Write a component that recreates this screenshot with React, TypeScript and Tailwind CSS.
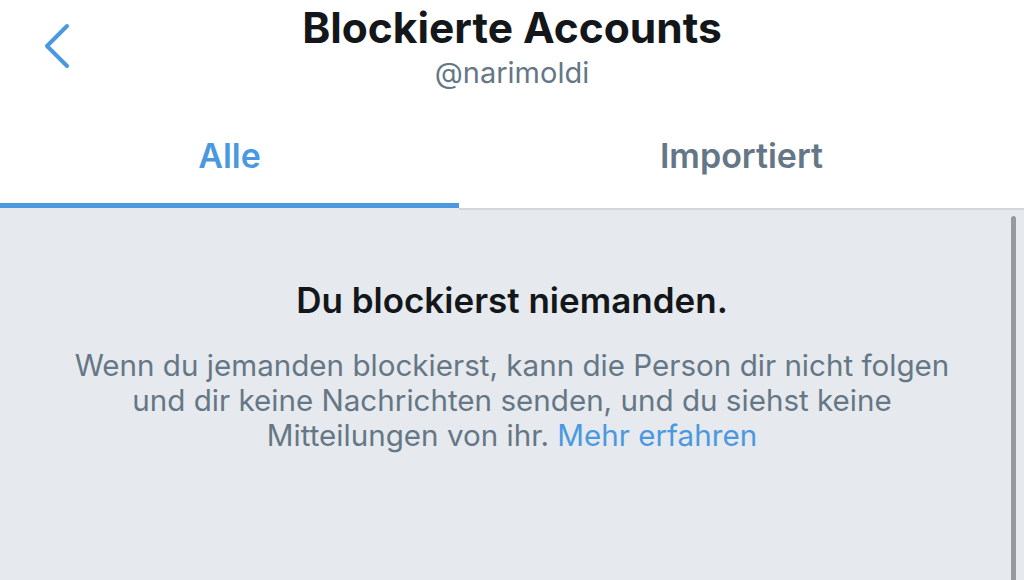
import React from "react";

export default function App() {
  return (
    <div className="w-[1024px] h-[580px] overflow-hidden bg-white flex flex-col" style={{ fontFamily: "Inter, 'Noto Sans', sans-serif" }}>
      <div className="relative h-[116px] flex flex-col items-center">
        <svg className="absolute left-[40px] top-[20px]" width="36" height="52" viewBox="0 0 36 52">
          <path d="M27 6 L7 26 L27 46" fill="none" stroke="#4a99e0" strokeWidth="4" strokeLinecap="round" strokeLinejoin="round" />
        </svg>
        <div className="mt-[4px] text-[42.5px] leading-[48px] font-bold text-[#14171a]">Blockierte Accounts</div>
        <div className="mt-[4px] text-[29px] leading-[34px] text-[#657786]">@narimoldi</div>
      </div>
      <div className="flex h-[94px]">
        <div className="w-[459px] flex flex-col">
          <div className="flex-1 flex items-center justify-center text-[34px] font-semibold text-[#4a99e0] pb-[8px]">Alle</div>
          <div className="h-[5px] bg-[#4a99e0]"></div>
          <div className="h-[2px] bg-[#e6e9ed]"></div>
        </div>
        <div className="flex-1 flex flex-col">
          <div className="flex-1 flex items-center justify-center text-[34px] font-semibold text-[#657786] pb-[8px]">Importiert</div>
          <div className="h-[5px]"></div>
          <div className="h-[2px] bg-[#d2d6da]"></div>
        </div>
      </div>
      <div className="relative flex-1 bg-[#e6e9ed] flex flex-col items-center pt-[69px]">
        <div className="absolute right-[8px] top-[6px] bottom-0 w-[5px] rounded-t-full bg-[#98999c]"></div>
        <div className="text-[35px] leading-[42px] font-semibold text-[#14171a]">Du blockierst niemanden.</div>
        <div className="mt-[27px] text-center text-[29.6px] leading-[35px] text-[#657786]">
          Wenn du jemanden blockierst, kann die Person dir nicht folgen
          <br />
          und dir keine Nachrichten senden, und du siehst keine
          <br />
          Mitteilungen von ihr. <span className="text-[#4a99e0]">Mehr erfahren</span>
        </div>
      </div>
    </div>
  );
}
